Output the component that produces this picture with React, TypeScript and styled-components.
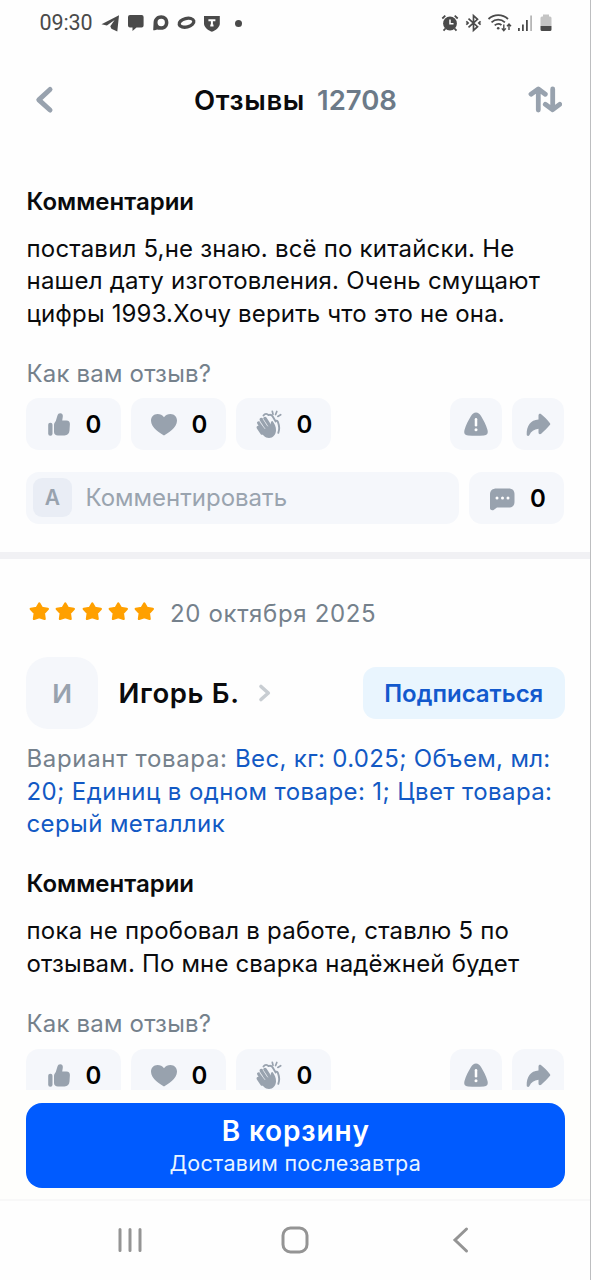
import React from "react";
import styled, { createGlobalStyle } from "styled-components";

const GlobalStyle = createGlobalStyle`
  * { box-sizing: border-box; }
  body { margin: 0; background: #fff; font-family: Inter, "Noto Sans", sans-serif; }
`;

const gray = "#98a2ae";

const Screen = styled.div`
  width: 591px;
  height: 1280px;
  display: flex;
  flex-direction: column;
  overflow: hidden;
  background: #fefefe;
  border-right: 1px solid #bdbec0;
  color: #0a0b0d;
`;

const StatusBar = styled.div`
  flex: none;
  height: 46px;
  padding: 0 37px 0 39px;
  display: flex;
  align-items: center;
  justify-content: space-between;
  color: #4a4a4a;
`;

const StatusSide = styled.div`
  display: flex;
  align-items: center;
`;

const Clock = styled.span`
  width: 62px;
  padding-left: 0.5px;
  font: 400 21.5px/26px Roboto, sans-serif;
  letter-spacing: -0.1px;
`;

const Header = styled.header`
  flex: none;
  height: 108px;
  padding: 0 28px 0 33px;
  display: flex;
  align-items: center;
  justify-content: space-between;
`;

const Title = styled.h1`
  margin: -1px 0 0 8px;
  display: flex;
  gap: 12px;
  font-size: 27.5px;
  line-height: 34px;
  font-weight: 600;
`;

const Label = styled.span<{ $ls?: number }>`
  letter-spacing: ${(p) => p.$ls ?? 0}px;
  white-space: pre;
`;

const Count = styled(Label)`
  color: #6c7a88;
`;

const Feed = styled.main`
  flex: none;
  height: 936px;
  overflow: hidden;
`;

const Review = styled.article<{ $top: number }>`
  padding: ${(p) => p.$top}px 26px 0;
`;

const Heading = styled.h2`
  margin: 0 0 15px;
  padding-left: 0.5px;
  font-size: 24px;
  line-height: 33px;
  font-weight: 600;
`;

const Lines = styled.p<{ $bottom: number; $color?: string }>`
  margin: 0 0 ${(p) => p.$bottom}px;
  padding-left: 0.5px;
  display: flex;
  flex-direction: column;
  font-size: 24px;
  line-height: 32.33px;
  color: ${(p) => p.$color ?? "#0a0b0d"};
`;

const Muted = styled(Label)`
  color: #75818c;
`;

const Question = styled.div`
  margin-bottom: 8.5px;
  padding-left: 0.5px;
  font-size: 24px;
  line-height: 32px;
  color: #75818c;
`;

const Row = styled.div<{ $gap?: number }>`
  display: flex;
  align-items: center;
  gap: ${(p) => p.$gap ?? 10}px;
`;

const ActionRow = styled(Row)`
  width: 538.4px;
  margin-bottom: 21.5px;
`;

const Pill = styled.button<{ $w: number }>`
  width: ${(p) => p.$w}px;
  height: 52px;
  flex: none;
  padding: 0;
  border: 0;
  border-radius: 13px;
  background: #f5f7fb;
  display: flex;
  align-items: center;
  justify-content: center;
  gap: 14px;
  font: 600 24px/32px Inter, sans-serif;
  color: #000;
`;

const Zero = styled.span`
  padding-top: 2px;
`;

const Spacer = styled.div`
  flex: 1;
`;

const Input = styled.div`
  flex: 1;
  height: 52px;
  padding-left: 7px;
  border-radius: 13px;
  background: #f5f7fb;
  display: flex;
  align-items: center;
  gap: 13.5px;
  font-size: 24px;
  line-height: 32px;
  color: #9aa4af;
`;

const Placeholder = styled(Label)`
  padding-top: 1px;
`;

const Avatar = styled.div<{ $size: number; $radius: number; $font: number; $bg: string }>`
  width: ${(p) => p.$size}px;
  height: ${(p) => p.$size}px;
  flex: none;
  border-radius: ${(p) => p.$radius}px;
  background: ${(p) => p.$bg};
  display: flex;
  align-items: center;
  justify-content: center;
  font-size: ${(p) => p.$font}px;
  font-weight: 600;
  color: ${gray};
`;

const Divider = styled.div`
  height: 7px;
  margin-top: 28px;
  background: #f1f1f4;
`;

const Rating = styled.div`
  height: 32px;
  margin-bottom: 27px;
  padding-left: 3px;
  display: flex;
  align-items: center;
  font-size: 24px;
  line-height: 32px;
  color: #75818c;
`;

const Stars = styled.div`
  width: 141px;
  height: 32px;
  padding-top: 3px;
  display: flex;
  gap: 5.3px;
`;

const Author = styled.div`
  width: 538.5px;
  height: 72px;
  margin-bottom: 14px;
  display: flex;
  align-items: center;
`;

const Name = styled.div`
  margin: 0 18px 0 20.5px;
  font-size: 27.5px;
  font-weight: 600;
`;

const Subscribe = styled.button`
  width: 201.5px;
  height: 52px;
  margin-left: auto;
  padding: 1px 0 0;
  border: 0;
  border-radius: 13px;
  background: #e9f5fe;
  font: 600 24px/32px Inter, sans-serif;
  color: #1259cd;
`;

const BuyBar = styled.div`
  flex: none;
  height: 111px;
  padding: 13px 26px 0;
  background: #fefefc;
  border-bottom: 2px solid #f8f8f8;
`;

const Buy = styled.button`
  width: 538.5px;
  height: 85px;
  padding: 12px 0 0;
  border: 0;
  border-radius: 16px;
  background: #005bff;
  color: #fff;
  display: flex;
  flex-direction: column;
  align-items: center;
  font-family: Inter, sans-serif;
`;

const BuyTitle = styled(Label)`
  padding-left: 1px;
  font-size: 28px;
  line-height: 33px;
  font-weight: 600;
`;

const BuyNote = styled(Label)`
  font-size: 21.5px;
  line-height: 31px;
  color: #eaf5ff;
`;

const NavBar = styled.nav`
  flex: 1;
  padding: 0 121px 2px 117px;
  display: flex;
  align-items: center;
  gap: 137px;
`;

const BackKey = styled.svg`
  margin-left: auto;
`;

const Telegram = () => (
  <svg width="20" height="20" viewBox="0 0 20 20" fill="currentColor">
    <path d="M.5 11.300 18 2.200 16.300 18.400 10.400 15.800 9.300 13.300 13.600 7 5.900 12.600z" />
  </svg>
);
const Message = () => (
  <svg width="20" height="20" viewBox="0 0 20 20" fill="currentColor">
    <path d="M3 2h12.600a2 2 0 0 1 2 2v8.400a2 2 0 0 1-2 2H10.500l-4 3.600v-3.600H4a2 2 0 0 1-2-2V4a2 2 0 0 1 2-2z" />
  </svg>
);
const Max = () => (
  <svg width="20" height="20" viewBox="0 0 20 20">
    <path d="M2.200 17.200 2.600 9C3 5 6 2.200 10.200 2.200c4.200 0 7.200 3 7.200 7.200s-3 7.400-7.200 7.400c-1.800 0-3-.1-4-.4-.9.5-2.400.9-4 .8zM10.200 5.800a3.700 3.700 0 1 0 0 7.400 3.700 3.700 0 0 0 0-7.400z" fill="currentColor" fillRule="evenodd" />
  </svg>
);
const Ring = () => (
  <svg width="22" height="20" viewBox="0 0 22 20">
    <ellipse cx="10.500" cy="9.700" rx="7.500" ry="4.300" transform="rotate(-14 10.500 9.700)" fill="none" stroke="currentColor" strokeWidth="3.300" />
  </svg>
);
const Shield = () => (
  <svg width="20" height="20" viewBox="0 0 20 20">
    <path d="M1 3h15.800v7.500c0 4-4.500 7-7.900 8.300C5.500 17.500 1 14.500 1 10.500z" fill="currentColor" />
    <path d="M5.400 7.300h7M8.900 7.300v5.200M7.300 12.500h3.200" fill="none" stroke="#fff" strokeWidth="2" />
  </svg>
);
const Alarm = () => (
  <svg width="20" height="20" viewBox="0 0 20 20">
    <circle cx="9" cy="10.500" r="6.900" fill="currentColor" />
    <path d="m1.300 5.500 3-2.800M16.700 5.500l-3-2.800M4.500 15.500l-2 2.200M13.500 15.500l2 2.200" stroke="currentColor" strokeWidth="1.800" />
    <path d="M9 6.500v4.300h3.500" fill="none" stroke="#fff" strokeWidth="1.500" />
  </svg>
);
const Bluetooth = () => (
  <svg width="18" height="20" viewBox="0 0 18 20" fill="none" stroke="currentColor" strokeWidth="1.700">
    <path d="M3.500 5.700 12.500 13.700l-4 3.600V2.700l4 3.600-9 8" />
    <path d="M1.300 8.300 3.100 10l-1.800 1.700M15.600 8.300 13.800 10l1.800 1.700" />
  </svg>
);
const Wifi = () => (
  <svg width="26" height="20" viewBox="0 0 26 20" fill="none" stroke="currentColor" strokeWidth="1.800">
    <path d="M1.500 6c5.600-5.300 13.900-5.300 19.500 0M4.500 9.300c3.900-3.600 9.500-3.600 13.400 0M7.700 12.400c2.200-1.900 4.800-1.900 6.800-.4" />
    <circle cx="11.200" cy="15.300" r="1.300" fill="currentColor" stroke="none" />
    <path d="M16.800 11.500v6M14.800 15.400l2 2.200 2-2.200M22 17v-6M20 13.200l2-2.200 2 2.200" strokeWidth="1.400" />
  </svg>
);
const Signal = () => (
  <svg width="18" height="20" viewBox="0 0 18 20" fill="currentColor">
    <path d="M1 15h1.800v3H1zM5 11.500h1.800V18H5zM9 7h1.800v11H9z" />
    <path d="M13.200 2.500H15V18h-1.800z" opacity=".4" />
  </svg>
);
const Battery = () => (
  <svg width="14" height="20" viewBox="0 0 14 20">
    <path d="M4 1.500h6v2h1a1.500 1.500 0 0 1 1.500 1.500v8h-11V5A1.500 1.500 0 0 1 3 3.500h1z" fill="#c4c4c4" />
    <path d="M1.500 13h11v3.500A1.500 1.500 0 0 1 11 18H3a1.500 1.500 0 0 1-1.500-1.500z" fill="currentColor" />
  </svg>
);
const Dot = styled.i`
  width: 7px;
  height: 7px;
  margin: 0 0 0 12px;
  border-radius: 50%;
  background: currentColor;
`;
const Icons = styled.div<{ $gap: number }>`
  display: flex;
  align-items: center;
  gap: ${(p) => p.$gap}px;
`;

const BackIcon = () => (
  <svg width="22" height="30" viewBox="0 0 22 30" fill="none" stroke={gray} strokeWidth="5" strokeLinecap="round" strokeLinejoin="round">
    <path d="M17 4.500 5.800 14.800 17 25" />
  </svg>
);
const SortIcon = () => (
  <svg width="34" height="30" viewBox="0 0 34 30" fill="none" stroke={gray} strokeWidth="4.800" strokeLinecap="round" strokeLinejoin="round">
    <path d="M10.300 25V4.500M3 9.200 10.300 4l7 5.200M24.700 4v20.500M17.300 19.300l7.400 5.400 7-5.400" />
  </svg>
);
const ThumbIcon = () => (
  <svg width="26" height="28" viewBox="0 0 26 28" fill={gray}>
    <rect x="2.200" y="12.800" width="4.300" height="13" rx="2" />
    <path d="M8 15c0-1.700.8-2.600 1.800-4l1.500-5c.6-2 1.500-2.700 2.800-2.700 2.200 0 3 1.700 2.700 3.500l-.6 3.700h4.300c2.300 0 3.600 1.500 3.400 3.600l-.4 6.500c-.2 3-1.900 4.900-5 4.900H12c-2.500 0-4-1.300-4-3.500z" />
  </svg>
);
const HeartIcon = () => (
  <svg width="28" height="28" viewBox="0 0 28 28" fill={gray}>
    <path d="M14 25.500C10.500 23.500 1 17.500 1 10.700 1 6.800 3.800 4 7.500 4c2.700 0 4.900 1.200 6.500 3.200C15.600 5.200 17.800 4 20.500 4 24.200 4 27 6.800 27 10.700c0 6.800-9.500 12.800-13 14.800z" />
  </svg>
);
const ClapIcon = () => (
  <svg width="28" height="30" viewBox="0 0 28 30" fill="none" strokeLinecap="round" strokeLinejoin="round">
    <path d="M8.500 6.500c1.500-2.200 3.700-2 5-.4 2-.7 3.300 0 4.200 1.400l3 5c.5-1.300 1.600-1 2.200.3 1.500 4 1.800 7.400.4 11" stroke={gray} strokeWidth="1.900" />
    <path d="m6.300 10.500 5 8M10 9.500l4.500 7M3.800 14l5 7M3.300 18.500 7 24" stroke={gray} strokeWidth="3.500" />
    <path d="M5 20 9.500 15l6.500 2c-.6-3.300 0-5 1.500-5 1.900 2.500 3.700 5.500 3.500 9.500-.2 4.300-3 7.500-7 7.500S7 25.800 5 20z" fill={gray} />
    <path d="m8.400 10.500 4.200 6.500M5.200 13.300l4.600 6.200" stroke="#f5f7fb" strokeWidth=".7" />
    <path d="m17.300 2.300.7 3M21.800 2.500 20.600 5.500M25.700 5.700 22.800 7.400" stroke={gray} strokeWidth="1.700" />
  </svg>
);
const WarnIcon = () => (
  <svg width="28" height="28" viewBox="0 0 28 28">
    <path d="M14 2.500c2.200 0 3.600 1.200 5 3.600 2.800 4.600 5 9 6.500 13.900.9 3.300-.5 5.300-3.600 5.500-5.400.3-10.400.3-15.800 0-3.100-.2-4.500-2.200-3.600-5.500C4 15.100 6.200 10.700 9 6.100c1.400-2.400 2.800-3.600 5-3.600z" fill={gray} />
    <path d="M14 9.300v5.900" stroke="#fff" strokeWidth="2.500" strokeLinecap="round" />
    <circle cx="14" cy="19.700" r="1.500" fill="#fff" />
  </svg>
);
const ShareIcon = () => (
  <svg width="28" height="28" viewBox="0 0 28 28" fill={gray}>
    <path d="M14.500 5.500c0-1.600 1.500-2.100 2.700-1.200 3.200 2.600 6 5.400 8.600 8.600.6.700.6 1.500 0 2.200-2.600 3.200-5.400 6-8.600 8.600-1.200.9-2.700.4-2.700-1.200v-3.700c-4.500.4-7.300 2.600-9.200 6.400-.6 1.200-2.600 1-2.600-.7C2.400 16 6.500 10 14.500 9.500z" />
  </svg>
);
const ChatIcon = () => (
  <svg width="28" height="28" viewBox="0 0 28 28">
    <path d="M8.500 4.500h12c4 0 6 2 6 6v7c0 4-2 6-6 6H9L6 25.700c-1.700 1.200-4 .4-4-1.800V10.500c0-4 2.500-6 6.500-6z" fill={gray} />
    <g fill="#fff">
      <circle cx="9" cy="14" r="1.500" />
      <circle cx="14.500" cy="14" r="1.500" />
      <circle cx="20" cy="14" r="1.500" />
    </g>
  </svg>
);
const Star = () => (
  <svg width="21" height="21" viewBox="0 0 21 21" fill="#ffa000" stroke="#ffa000" strokeWidth="2.400" strokeLinejoin="round">
    <path d="m10.300 2.500 2.500 4.400 6 1-4 4.200.8 5.700-5.300-1.600L5 17.800l.8-5.700-4-4.200 6-1z" />
  </svg>
);
const ChevronIcon = () => (
  <svg width="14" height="20" viewBox="0 0 14 20" fill="none" stroke="#c8cdd2" strokeWidth="3.600" strokeLinecap="round" strokeLinejoin="round">
    <path d="m3 3.500 7.300 6.500L3 16.500" />
  </svg>
);

const Reactions = () => (
  <ActionRow>
    <Pill $w={95}><ThumbIcon /><Zero>0</Zero></Pill>
    <Pill $w={95}><HeartIcon /><Zero>0</Zero></Pill>
    <Pill $w={95}><ClapIcon /><Zero>0</Zero></Pill>
    <Spacer />
    <Pill $w={52}><WarnIcon /></Pill>
    <Pill $w={52}><ShareIcon /></Pill>
  </ActionRow>
);

export default function App() {
  return (
    <Screen>
      <GlobalStyle />
      <StatusBar>
        <StatusSide>
          <Clock>09:30</Clock>
          <Icons $gap={5}>
            <Telegram />
            <Message />
            <Max />
            <Ring />
            <Shield />
          </Icons>
          <Dot />
        </StatusSide>
        <Icons $gap={4}>
          <Alarm />
          <Bluetooth />
          <Wifi />
          <Signal />
          <Battery />
        </Icons>
      </StatusBar>
      <Header>
        <BackIcon />
        <Title>
          <Label $ls={0.65}>Отзывы</Label>
          <Count>12708</Count>
        </Title>
        <SortIcon />
      </Header>
      <Feed>
        <Review $top={31}>
          <Heading><Label>Комментарии</Label></Heading>
          <Lines $bottom={28}>
            <Label $ls={0.2}>поставил 5,не знаю. всё по китайски. Не</Label>
            <Label $ls={0.2}>нашел дату изготовления. Очень смущают</Label>
            <Label $ls={0.16}>цифры 1993.Хочу верить что это не она.</Label>
          </Lines>
          <Question><Label $ls={0.18}>Как вам отзыв?</Label></Question>
          <Reactions />
          <ActionRow>
            <Input>
              <Avatar $size={39} $radius={9} $font={21} $bg="#e9edf5">А</Avatar>
              <Placeholder>Комментировать</Placeholder>
            </Input>
            <Pill $w={95}><ChatIcon /><Zero>0</Zero></Pill>
          </ActionRow>
        </Review>
        <Divider />
        <Review $top={39.5}>
          <Rating>
            <Stars>
              <Star /><Star /><Star /><Star /><Star />
            </Stars>
            <Label $ls={0.66}>20 октября 2025</Label>
          </Rating>
          <Author>
            <Avatar $size={72} $radius={22} $font={26} $bg="#f5f7fb">И</Avatar>
            <Name><Label $ls={0.65}>Игорь Б.</Label></Name>
            <ChevronIcon />
            <Subscribe><Label>Подписаться</Label></Subscribe>
          </Author>
          <Lines $bottom={27} $color="#1259c4">
            <Label $ls={0.34}><Muted $ls={0.66}>Вариант товара: </Muted>Вес, кг: 0.025; Объем, мл:</Label>
            <Label $ls={0.4}>20; Единиц в одном товаре: 1; Цвет товара:</Label>
            <Label $ls={0.4}>серый металлик</Label>
          </Lines>
          <Heading><Label>Комментарии</Label></Heading>
          <Lines $bottom={28}>
            <Label $ls={0.22}>пока не пробовал в работе, ставлю 5 по</Label>
            <Label $ls={0.17}>отзывам. По мне сварка надёжней будет</Label>
          </Lines>
          <Question><Label $ls={0.18}>Как вам отзыв?</Label></Question>
          <Reactions />
        </Review>
      </Feed>
      <BuyBar>
        <Buy>
          <BuyTitle $ls={0.85}>В корзину</BuyTitle>
          <BuyNote $ls={0.3}>Доставим послезавтра</BuyNote>
        </Buy>
      </BuyBar>
      <NavBar>
        <svg width="26" height="30" viewBox="0 0 26 30" stroke="#949494" strokeWidth="3" strokeLinecap="round">
          <path d="M3 4.500v21M13 4.500v21M23 4.500v21" />
        </svg>
        <svg width="30" height="30" viewBox="0 0 30 30" fill="none" stroke="#949494" strokeWidth="3">
          <rect x="3" y="3" width="24" height="24" rx="7.500" />
        </svg>
        <BackKey width="18" height="30" viewBox="0 0 18 30" fill="none" stroke="#949494" strokeWidth="3" strokeLinecap="round">
          <path d="M15.500 4 4 15l11.500 11" />
        </BackKey>
      </NavBar>
    </Screen>
  );
}
